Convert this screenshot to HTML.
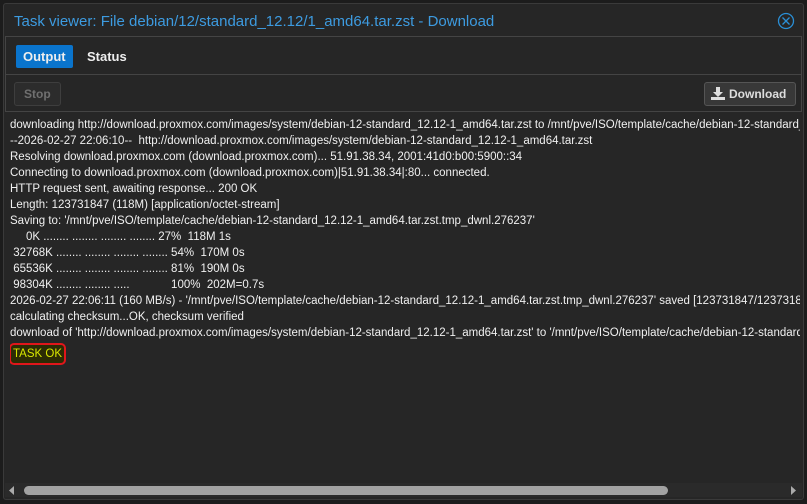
<!DOCTYPE html>
<html><head><meta charset="utf-8"><style>
*{box-sizing:border-box;margin:0;padding:0}
body{width:807px;height:504px;background:#1c1c1c;font-family:"Liberation Sans",sans-serif;overflow:hidden;position:relative}
.win{position:absolute;left:3px;top:3px;width:801px;height:497px;background:#262626;border:1px solid #3a3a3a;border-radius:3px;overflow:hidden}
.title{position:absolute;left:10px;top:9px;font-size:15px;color:#3d9be0;white-space:nowrap}
.close{position:absolute;left:773px;top:8px}
.tabs{position:absolute;left:1px;top:32px;width:797px;height:38px;border-top:1px solid #444;border-left:1px solid #444;border-right:1px solid #444}
.tab{position:absolute;top:8px;height:23px;line-height:23px;font-size:13px;font-weight:bold;color:#eee;padding:0 7px}
.tb{position:absolute;left:1px;top:70px;width:797px;height:38px;border-top:1px solid #444;border-bottom:1px solid #444;border-left:1px solid #444;border-right:1px solid #444}
.btn{position:absolute;top:7px;height:24px;line-height:22px;font-size:12px;font-weight:bold;border-radius:3px;padding:0 9px}
.log{position:absolute;left:6px;top:113px;width:790px;overflow:hidden;font-size:11.5px;color:#f0f0f0;line-height:16px;white-space:pre}
.ok{display:inline-block;border:2px solid #e0161b;border-radius:5px;background:#2c2c05;color:#d8e600;padding:1px 2px;line-height:16px;margin-left:-1px;margin-top:2px}
.sb{position:absolute;left:1px;top:479px;width:797px;height:14px;background:#2a2a2a}
.thumb{position:absolute;left:19px;top:3px;width:644px;height:9px;background:#a2a2a2;border-radius:5px}
</style></head><body>
<div class="win">
<div class="title">Task viewer: File debian/12/standard_12.12/1_amd64.tar.zst - Download</div>
<svg class="close" width="18" height="18" viewBox="0 0 18 18"><circle cx="9" cy="9" r="7.5" fill="none" stroke="#2a8fd6" stroke-width="1.3"/><path d="M5.5 5.5L12.5 12.5M12.5 5.5L5.5 12.5" stroke="#2a8fd6" stroke-width="1.3"/></svg>
<div class="tabs">
<div class="tab" style="left:10px;background:#0a74cc;border-radius:2px">Output</div>
<div class="tab" style="left:74px">Status</div>
</div>
<div class="tb">
<div class="btn" style="left:8px;border:1px solid #3e3e3e;background:#2c2c2c;color:#707070">Stop</div>
<div class="btn" style="left:698px;border:1px solid #555;background:#383838;color:#ddd;padding-left:6px">
<svg width="14" height="13" viewBox="0 0 14 13" style="vertical-align:-2px;margin-right:4px"><path d="M5 0h4v5h3L7 10 2 5h3z" fill="#ddd"/><rect x="0" y="10" width="14" height="3" fill="#ddd"/></svg>Download</div>
</div>
<div class="log">downloading http://download.proxmox.com/images/system/debian-12-standard_12.12-1_amd64.tar.zst to /mnt/pve/ISO/template/cache/debian-12-standard_12.12-1_amd64.tar.zst
--2026-02-27 22:06:10--  http://download.proxmox.com/images/system/debian-12-standard_12.12-1_amd64.tar.zst
Resolving download.proxmox.com (download.proxmox.com)... 51.91.38.34, 2001:41d0:b00:5900::34
Connecting to download.proxmox.com (download.proxmox.com)|51.91.38.34|:80... connected.
HTTP request sent, awaiting response... 200 OK
Length: 123731847 (118M) [application/octet-stream]
Saving to: '/mnt/pve/ISO/template/cache/debian-12-standard_12.12-1_amd64.tar.zst.tmp_dwnl.276237'
     0K ........ ........ ........ ........ 27%  118M 1s
 32768K ........ ........ ........ ........ 54%  170M 0s
 65536K ........ ........ ........ ........ 81%  190M 0s
 98304K ........ ........ .....             100%  202M=0.7s
2026-02-27 22:06:11 (160 MB/s) - '/mnt/pve/ISO/template/cache/debian-12-standard_12.12-1_amd64.tar.zst.tmp_dwnl.276237' saved [123731847/123731847]
calculating checksum...OK, checksum verified
download of 'http://download.proxmox.com/images/system/debian-12-standard_12.12-1_amd64.tar.zst' to '/mnt/pve/ISO/template/cache/debian-12-standard_12.12-1_amd64.tar.zst' finished
<span class="ok">TASK OK</span></div>
<div class="sb"><svg style="position:absolute;left:4px;top:3px" width="6" height="9"><path d="M5 0v9L0 4.5z" fill="#aaa"/></svg><div class="thumb"></div><svg style="position:absolute;left:786px;top:3px" width="6" height="9"><path d="M0 0v9L5 4.5z" fill="#aaa"/></svg></div>
</div>
</body></html>
